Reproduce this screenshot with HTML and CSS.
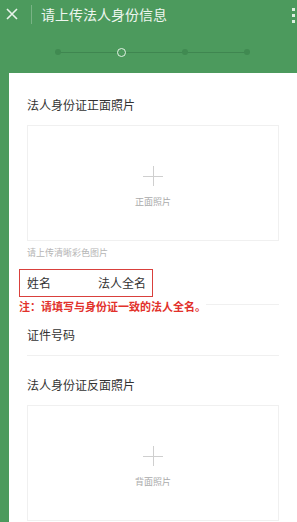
FILE: index.html
```html
<!DOCTYPE html>
<html lang="zh-CN">
<head>
    <meta charset="UTF-8">
    <meta name="viewport" content="width=device-width, initial-scale=1.0">
    <title>请上传法人身份信息</title>
    <link rel="stylesheet" href="styles.css">
</head>
<body>

    <!-- Top bar -->
    <div class="topbar">
        <svg class="close-icon" width="12" height="12" viewBox="0 0 12 12">
            <path d="M1 1 L11 11 M11 1 L1 11" stroke="#e8f3ea" stroke-width="1.6" fill="none"/>
        </svg>
        <span class="bar-divider"></span>
        <span class="bar-title">请上传法人身份信息</span>
        <span class="more">
            <i></i><i></i><i></i>
        </span>
    </div>

    <!-- Step indicator -->
    <div class="steps">
        <div class="steps-track">
            <span class="dot"></span>
            <span class="dot current"></span>
            <span class="dot"></span>
            <span class="dot"></span>
        </div>
    </div>

    <!-- Form card -->
    <div class="card">
        <div class="section-title">法人身份证正面照片</div>
        <div class="upload-box">
            <span class="plus"></span>
            <span class="upload-text">正面照片</span>
        </div>
        <div class="hint">请上传清晰彩色图片</div>

        <div class="field name-field">
            <div class="field-mark">
                <span class="field-label">姓名</span>
                <span class="field-value">法人全名</span>
            </div>
            <div class="note">注：请填写与身份证一致的法人全名。</div>
        </div>

        <div class="field id-field">
            <span class="field-label">证件号码</span>
        </div>

        <div class="section-title second">法人身份证反面照片</div>
        <div class="upload-box">
            <span class="plus"></span>
            <span class="upload-text">背面照片</span>
        </div>
    </div>

</body>
</html>
```

FILE: styles.css
```css
body, html {
    margin: 0;
    padding: 0;
    height: 100%;
    overflow: hidden;
    background-color: #4c9a5d;
    font-family: "Noto Sans CJK SC", "Noto Sans", sans-serif;
}

/* Top bar */
.topbar {
    height: 28px;
    display: flex;
    align-items: center;
    position: relative;
}

.close-icon {
    margin-left: 6px;
}

.bar-divider {
    width: 1px;
    height: 19px;
    background-color: rgba(255, 255, 255, 0.25);
    margin-left: 13px;
}

.bar-title {
    margin-left: 9px;
    color: #eef6ef;
    font-size: 14px;
    line-height: 20px;
}

.more {
    position: absolute;
    right: 2px;
    top: 8px;
    display: flex;
    flex-direction: column;
    gap: 3px;
}

.more i {
    display: block;
    width: 3px;
    height: 3px;
    background-color: #dcefdf;
}

/* Steps */
.steps {
    height: 45px;
    display: flex;
    align-items: center;
    padding-left: 55px;
    box-sizing: border-box;
}

.steps-track {
    position: relative;
    display: flex;
    gap: 56px;
    align-items: center;
    margin-top: 3px;
}

.steps-track::before {
    content: "";
    position: absolute;
    left: 3px;
    right: 3px;
    top: 50%;
    height: 1px;
    background-color: #3f8650;
}

.dot {
    position: relative;
    width: 6px;
    height: 6px;
    border-radius: 50%;
    background-color: #408a51;
}

.dot.current {
    width: 7px;
    height: 7px;
    background-color: #4c9a5d;
    border: 1.5px solid #e4f3e6;
}

/* Card */
.card {
    margin-left: 9px;
    background-color: #fff;
    padding: 22px 18px 40px 18px;
    min-height: 100%;
}

.section-title {
    font-size: 12px;
    line-height: 20px;
    color: #333;
}

.section-title.second {
    margin-top: 19px;
}

.upload-box {
    margin-top: 10px;
    height: 114px;
    border: 1px solid #f0f0f0;
    display: flex;
    flex-direction: column;
    align-items: center;
    justify-content: center;
}

.plus {
    position: relative;
    width: 20px;
    height: 20px;
    margin-top: 8px;
}

.plus::before,
.plus::after {
    content: "";
    position: absolute;
    background-color: #cfcfcf;
}

.plus::before {
    left: 0;
    right: 0;
    top: 10px;
    height: 1px;
}

.plus::after {
    top: 0;
    bottom: 0;
    left: 10px;
    width: 1px;
}

.upload-text {
    margin-top: 9px;
    font-size: 9px;
    color: #aaa;
}

.hint {
    margin-top: 6px;
    font-size: 9px;
    line-height: 12px;
    color: #b5b5b5;
}

/* Form rows */
.field {
    position: relative;
    border-bottom: 1px solid #f0f0f0;
}

.field-label {
    font-size: 12px;
    line-height: 18px;
    color: #333;
}

.name-field {
    margin-top: 10px;
    padding-bottom: 7px;
}

.field-mark {
    display: inline-flex;
    margin-left: -8px;
    padding: 4px 6px 4px 7px;
    border: 1.5px solid #d9403c;
}

.field-mark .field-label {
    width: 71px;
}

.field-value {
    font-size: 12px;
    line-height: 18px;
    color: #333;
}

.note {
    position: absolute;
    left: -8px;
    top: 29px;
    font-size: 11px;
    line-height: 16px;
    font-weight: bold;
    color: #e2312b;
    background-color: #fff;
    white-space: nowrap;
}

.id-field {
    padding: 21px 0 11px 0;
}

.id-field .field-label {
    display: block;
}
```
